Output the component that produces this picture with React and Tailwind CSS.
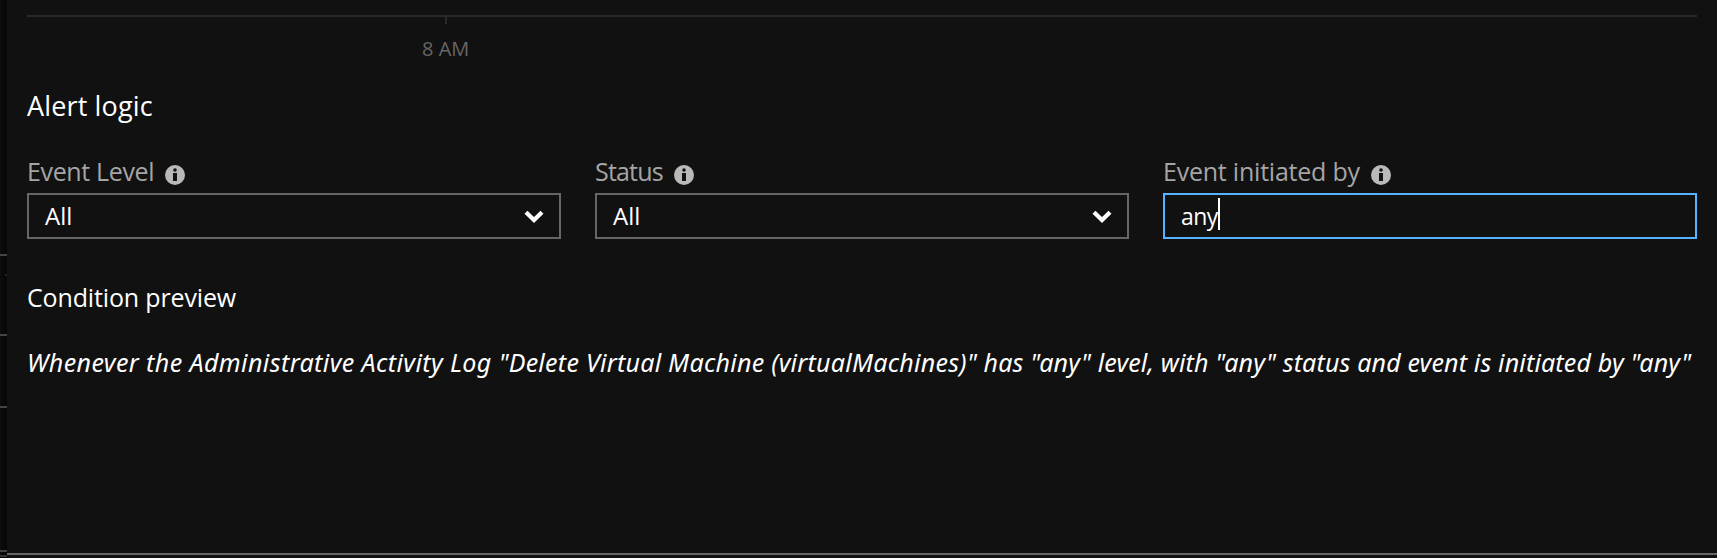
import React from "react";

function InfoIcon() {
  return (
    <svg className="absolute left-full top-[14px] ml-[11px] h-5 w-5" viewBox="0 0 20 20">
      <circle cx="10" cy="10" r="10" fill="#b9b9b9" />
      <circle cx="10" cy="5" r="1.8" fill="#111" />
      <path d="M8 8h4v8H8z" fill="#111" />
    </svg>
  );
}

function Chevron() {
  return (
    <svg className="h-[13px] w-5" viewBox="0 0 20 13">
      <path d="M2 2.2 10 10 18 2.2" fill="none" stroke="#fff" strokeWidth="4.2" />
    </svg>
  );
}

function Field({ label, labelClass, active, children }) {
  return (
    <div className="w-[534px]">
      <div className="flex h-[42px]">
        <div className={"relative h-9 whitespace-nowrap text-[25px] leading-[40px] text-[#a5a5a5] " + labelClass}>
          {label}
          <InfoIcon />
        </div>
      </div>
      <div
        className={
          "flex h-[46px] items-center border-2 pl-4 pr-[15px] text-[24px] text-white " +
          (active ? "border-[#55b3ff]" : "border-[#666]")
        }
      >
        {children}
      </div>
    </div>
  );
}

export default function App() {
  return (
    <div className="flex h-[558px] w-[1717px] overflow-hidden bg-[#111] font-['Open_Sans','Noto_Sans',sans-serif]">
      <div className="flex h-full w-[7px] shrink-0 flex-col bg-linear-to-r from-[#0d0d0d] to-[#060606]">
        <div className="mt-[254px] h-[2px] bg-[#444]" />
        <div className="ml-[5px] mt-[18px] h-[2px] bg-[#22222c]" />
        <div className="mt-[58px] h-[2px] bg-[#444]" />
        <div className="mt-[70px] h-[2px] bg-[#444]" />
        <div className="mt-[142px] h-[2px] bg-[#444]" />
        <div className="mt-[3px] h-[2px] bg-[#333]" />
      </div>
      <main className="flex h-full w-[1710px] flex-col">
        <div className="ml-5 mt-[15px] h-[2px] w-[1670px] bg-[#292929]" />
        <div className="ml-[438px] h-[7px] w-[2px] bg-[#292929]" />
        <div className="ml-[415px] h-[50px] whitespace-nowrap text-[20px] leading-[50px] text-[#666]">8 AM</div>
        <h2 className="ml-5 mt-3 h-[41px] whitespace-nowrap text-[27px] leading-[40px] tracking-[0.15px] text-white">
          Alert logic
        </h2>
        <div className="ml-5 mt-[24px] flex gap-[34px]">
          <Field label="Event Level" labelClass="tracking-[-0.35px]">
            <span>All</span>
            <span className="ml-auto">
              <Chevron />
            </span>
          </Field>
          <Field label="Status" labelClass="tracking-[-0.8px]">
            <span>All</span>
            <span className="ml-auto">
              <Chevron />
            </span>
          </Field>
          <Field label="Event initiated by" labelClass="tracking-[-0.22px]" active>
            <span className="text-[23px] tracking-[-0.6px]">any</span>
            <span className="mb-[4px] h-8 w-[2px] bg-white" />
          </Field>
        </div>
        <h3 className="ml-5 mt-[38px] h-[40px] whitespace-nowrap text-[25px] leading-[40px] tracking-[-0.15px] text-white">
          Condition preview
        </h3>
        <p className="ml-5 mt-[25px] h-[40px] whitespace-nowrap font-['Noto_Sans',sans-serif] text-[25px] italic leading-[40px] tracking-[0.264px] text-white">
          <span className="tracking-[0.41px]">Whenever the Administrative Activity Log </span>
          "Delete Virtual Machine (virtualMachines)"
          <span className="tracking-[0.16px]">
            {' has "any" level, with "any" status and event is initiated by "any"'}
          </span>
        </p>
        <div className="mt-auto mb-[3px] h-[2px] bg-[#666]" />
      </main>
    </div>
  );
}
